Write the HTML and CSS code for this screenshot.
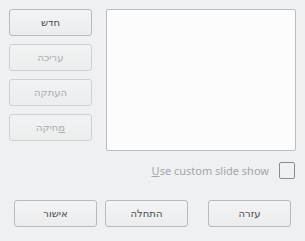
FILE: index.html
```html
<!DOCTYPE html>
<html lang="he">
<head>
<meta charset="utf-8">
<link rel="stylesheet" href="styles.css">
</head>
<body>
<div class="dialog">
  <div class="top">
    <div class="side">
      <button class="btn" dir="rtl">חדש</button>
      <button class="btn disabled" dir="rtl">עריכה</button>
      <button class="btn disabled" dir="rtl">העתקה</button>
      <button class="btn disabled" dir="rtl"><u>מ</u>חיקה</button>
    </div>
    <div class="list"></div>
  </div>
  <div class="check-row">
    <span class="check-label"><u>U</u>se custom slide show</span>
    <span class="checkbox"></span>
  </div>
  <div class="bottom">
    <button class="btn" dir="rtl">אישור</button>
    <button class="btn" dir="rtl">התחלה</button>
    <button class="btn help" dir="rtl">עזרה</button>
  </div>
</div>
</body>
</html>
```
FILE: styles.css
```css
html, body {
  margin: 0;
  padding: 0;
  background: #eff0f1;
  width: 305px;
  height: 241px;
  overflow: hidden;
}
.dialog {
  padding: 9px 9px 0 9px;
  font-family: "Noto Sans", "DejaVu Sans", sans-serif;
  font-size: 10px;
}
.top {
  display: flex;
  gap: 14px;
}
.side {
  display: flex;
  flex-direction: column;
  gap: 8px;
}
.btn {
  display: block;
  width: 83px;
  height: 27px;
  box-sizing: border-box;
  border: 1px solid #b9babb;
  border-radius: 3px;
  background: linear-gradient(#f4f4f5, #ebeced);
  color: #45494d;
  font-family: "DejaVu Sans", sans-serif;
  font-weight: 400;
  font-size: 10px;
  line-height: 25px;
  text-align: center;
  padding: 0;
  margin: 0;
}
.btn.disabled {
  color: #a8aaac;
  border-color: #cfd0d1;
  background: linear-gradient(#f1f2f3, #eceded);
}
.list {
  width: 190px;
  height: 142px;
  box-sizing: border-box;
  border: 1px solid #bcbdbe;
  border-radius: 2px;
  background: #fcfcfc;
}
.check-row {
  display: flex;
  justify-content: flex-end;
  align-items: center;
  gap: 10px;
  margin-top: 11px;
  padding-right: 1px;
}
.check-label {
  color: #a5a7a9;
  font-size: 11px;
}
.checkbox {
  width: 16px;
  height: 17px;
  box-sizing: border-box;
  border: 1px solid #8a8c8e;
  border-radius: 2px;
  background: #f0f1f2;
}
.bottom {
  display: flex;
  gap: 8px;
  margin-top: 21px;
  padding-left: 5px;
}
.bottom .help {
  margin-left: 12px;
}
```
